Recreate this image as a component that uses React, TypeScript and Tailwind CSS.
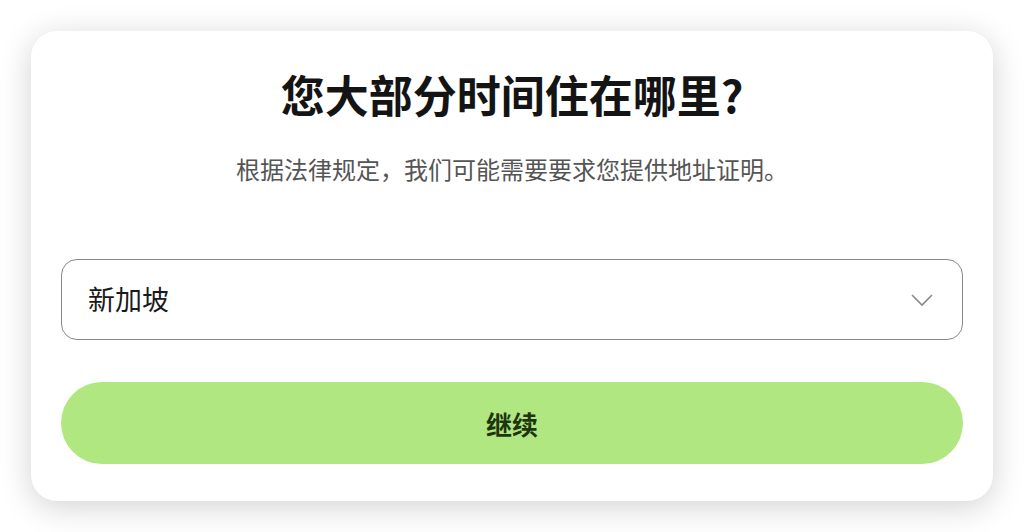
import * as React from 'react';

const font = { fontFamily: '"Noto Sans CJK SC", "Noto Sans", sans-serif' };

const App: React.FunctionComponent = () => {
    return (
        <div className="w-full h-[532px] bg-white p-[31px]" style={font}>
            <div className="h-full w-full bg-white rounded-[26px] shadow-[0_6px_32px_rgba(0,0,0,0.18)] px-[30px] pt-[35px] flex flex-col">
                <h1 className="text-center text-[44px] leading-[56px] font-semibold text-[#141414]">
                    您大部分时间住在哪里?
                </h1>
                <p className="mt-[31px] text-center text-[24px] leading-[32px] text-[#555555]">
                    根据法律规定，我们可能需要要求您提供地址证明。
                </p>
                <button className="mt-[74px] h-[81px] w-full rounded-[16px] border-[1.5px] border-[#888888] bg-white flex items-center justify-between pl-[26px] pr-[28px]">
                    <span className="text-[27px] text-[#1a1a1a]">新加坡</span>
                    <svg width="24" height="14" viewBox="0 0 24 14" fill="none">
                        <polyline points="2,2 12,12 22,2" stroke="#8a8a8a" strokeWidth="1.6" />
                    </svg>
                </button>
                <button className="mt-[42px] h-[82px] w-full rounded-full bg-[#b1e781] flex items-center justify-center">
                    <span className="text-[26px] font-bold text-[#1e3510]">继续</span>
                </button>
            </div>
        </div>
    );
};

export default App;
